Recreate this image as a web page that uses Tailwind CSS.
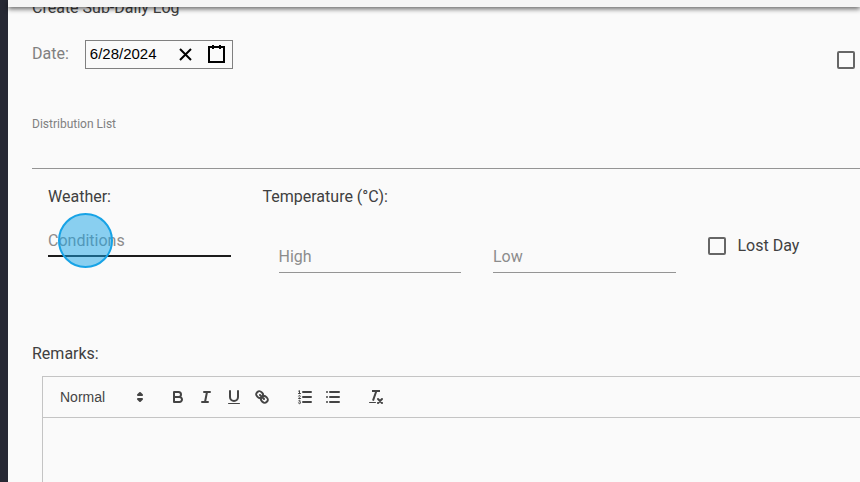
<!DOCTYPE html>
<html lang="en">
<head>
    <meta charset="UTF-8">
    <meta name="viewport" content="width=device-width, initial-scale=1.0">
    <title>Create Sub-Daily Log</title>
    <script src="https://cdn.jsdelivr.net/npm/@tailwindcss/browser@4"></script>
</head>
<body class="flex h-screen overflow-hidden bg-[#fafafa] font-[Roboto,sans-serif] text-base text-[#404040]">
    <!-- Sidebar edge -->
    <aside class="w-2 shrink-0 bg-[#272934]"></aside>

    <div class="flex min-w-0 flex-1 flex-col">
        <header class="relative z-10 h-[7px] shrink-0 bg-[#f5f5f5] shadow-[0_2px_5px_rgba(0,0,0,0.6)]"></header>

        <main class="flex min-h-0 flex-1 flex-col pl-6">
            <h1 class="-mt-[11px] shrink-0 leading-6">Create Sub-Daily Log</h1>

            <!-- Date -->
            <div class="mt-[19px] flex shrink-0 items-center justify-between pr-[5px]">
                <div class="flex items-center gap-4">
                    <label for="date" class="text-[#808080]">Date:</label>
                    <div class="flex h-[29px] items-center border border-[#808080]">
                        <input id="date" type="text" value="6/28/2024" class="w-[84px] pl-1 font-['Liberation_Sans',sans-serif] text-[15px] text-black outline-none">
                        <button type="button" aria-label="Clear date" class="px-[6px]">
                            <svg class="block size-[19px]" viewBox="0 0 19 19" stroke="black" stroke-width="2"><path d="M4 4 15 15M15 4 4 15"/></svg>
                        </button>
                        <button type="button" aria-label="Open calendar" class="px-[6px]">
                            <svg class="block size-[19px]" viewBox="0 0 19 19" stroke="black" stroke-width="2" fill="none"><rect x="2" y="2" width="15" height="15"/><path d="M6 0V4M13 0V4"/></svg>
                        </button>
                    </div>
                </div>
                <input type="checkbox" aria-label="Select log" class="mt-3 size-[18px] appearance-none rounded-[2px] border-2 border-[#666]">
            </div>

            <!-- Distribution list -->
            <div class="mt-[47px] flex shrink-0 flex-col border-b border-[#949494]">
                <label for="distribution" class="text-xs text-[#808080]">Distribution List</label>
                <input id="distribution" type="text" class="h-9 outline-none">
            </div>

            <!-- Weather and temperature -->
            <section class="-mr-[30px] grid shrink-0 grid-cols-4 pt-4">
                <div class="px-4">
                    <label for="conditions" class="block leading-6">Weather:</label>
                    <div class="relative mt-4">
                        <input id="conditions" type="text" placeholder="Conditions" class="block h-8 w-full border-b-2 border-[#1c1c1c] outline-none placeholder:text-[#8c8c8c]">
                        <span class="pointer-events-none absolute -top-3 left-[10px] size-[55px] rounded-full border-2 border-[#17a3e6] bg-[#17a3e6]/50"></span>
                    </div>
                </div>
                <fieldset class="col-span-2">
                    <legend class="block px-4 leading-6">Temperature (°C):</legend>
                    <div class="mt-8 grid grid-cols-2 gap-8 pl-8">
                        <input type="text" aria-label="High" placeholder="High" class="block h-8 w-full border-b border-[#949494] outline-none placeholder:text-[#8c8c8c]">
                        <input type="text" aria-label="Low" placeholder="Low" class="block h-8 w-full border-b border-[#949494] outline-none placeholder:text-[#8c8c8c]">
                    </div>
                </fieldset>
                <div class="px-8 pt-[49px]">
                    <label class="flex items-center gap-3 leading-6">
                        <input type="checkbox" class="size-[18px] appearance-none rounded-[2px] border-2 border-[#666]">
                        Lost Day
                    </label>
                </div>
            </section>

            <!-- Remarks -->
            <h2 id="remarks" class="mt-[69px] shrink-0 leading-6">Remarks:</h2>
            <div class="mt-[10px] ml-[10px] flex min-h-0 flex-1 flex-col border-t border-l border-[#c4c4c4]">
                <div class="flex shrink-0 gap-[15px] border-b border-[#c4c4c4] p-2">
                    <div class="relative h-6 w-[98px] text-[#444]">
                        <select aria-label="Heading" class="h-6 w-full appearance-none pl-[9px] font-['Liberation_Sans',sans-serif] text-sm outline-none">
                            <option>Normal</option>
                            <option>Heading 1</option>
                            <option>Heading 2</option>
                        </select>
                        <svg class="pointer-events-none absolute top-[3px] right-0 size-[18px]" viewBox="0 0 18 18" fill="#444" stroke="#444" stroke-width="2" stroke-linecap="round" stroke-linejoin="round"><path d="M7 11 9 13 11 11Z M7 7 9 5 11 7Z"/></svg>
                    </div>
                    <div class="flex">
                        <button type="button" aria-label="Bold" class="px-[5px]">
                            <svg class="block size-[18px]" viewBox="0 0 18 18" fill="none" stroke="#444" stroke-width="2" stroke-linecap="round" stroke-linejoin="round"><path d="M5 4H9.5A2.5 2.5 0 0 1 12 6.5A2.5 2.5 0 0 1 9.5 9H5V4ZM5 9H10.5A2.5 2.5 0 0 1 13 11.5A2.5 2.5 0 0 1 10.5 14H5V9Z"/></svg>
                        </button>
                        <button type="button" aria-label="Italic" class="px-[5px]">
                            <svg class="block size-[18px]" viewBox="0 0 18 18" fill="none" stroke="#444" stroke-width="2" stroke-linecap="round"><path d="M7 4H13M5 14H11M8 14 10 4"/></svg>
                        </button>
                        <button type="button" aria-label="Underline" class="px-[5px]">
                            <svg class="block size-[18px]" viewBox="0 0 18 18" fill="none" stroke="#444" stroke-width="2" stroke-linecap="round"><path d="M5 3V9A4.012 4.012 0 0 0 9 13A4.012 4.012 0 0 0 13 9V3"/><rect x="3" y="15" width="12" height="1" rx=".5" fill="#444" stroke="none"/></svg>
                        </button>
                        <button type="button" aria-label="Link" class="px-[5px]">
                            <svg class="block size-[18px]" viewBox="0 0 18 18" fill="none" stroke="#444" stroke-width="2" stroke-linecap="round" stroke-linejoin="round"><path d="M7 7 11 11M8.9 4.577A3.476 3.476 0 0 1 9.26 9.26 3.476 3.476 0 0 1 4.577 8.9C3.185 7.5 2.035 6.4 4.217 4.217S7.5 3.185 8.9 4.577ZM13.423 9.1A3.476 3.476 0 0 0 8.74 8.74 3.476 3.476 0 0 0 9.1 13.423C10.492 14.815 11.6 15.965 13.783 13.783S14.815 10.5 13.423 9.1Z"/></svg>
                        </button>
                    </div>
                    <div class="flex">
                        <button type="button" aria-label="Numbered list" class="px-[5px]">
                            <svg class="block size-[18px]" viewBox="0 0 18 18" fill="none" stroke="#444" stroke-linecap="round" stroke-linejoin="round"><path stroke-width="2" d="M7 4H15M7 9H15M7 14H15"/><path d="M2.5 5.5H4.5M2.6 3.1 3.5 2.6V5.5M4.5 10.5H2.5C2.5 9.7 4.35 9.1 4.35 8.2A.95.95 0 0 0 2.5 8.1M2.5 14.85A.96.96 0 0 0 4.5 14.5.9.9 0 0 0 3.5 13.8.8.8 0 0 0 4.3 13 .9.9 0 0 0 2.6 12.8"/></svg>
                        </button>
                        <button type="button" aria-label="Bulleted list" class="px-[5px]">
                            <svg class="block size-[18px]" viewBox="0 0 18 18" fill="none" stroke="#444" stroke-width="2" stroke-linecap="round"><path d="M6 4H15M6 9H15M6 14H15M3 4H3M3 9H3M3 14H3"/></svg>
                        </button>
                    </div>
                    <button type="button" aria-label="Clear formatting" class="px-[5px]">
                        <svg class="block size-[18px]" viewBox="0 0 18 18" fill="none" stroke="#444" stroke-width="2"><path d="M5 3H13M6 12.7 9.35 3"/><path d="M11 11 15 15M15 11 11 15" stroke-linecap="round"/><rect x="2" y="14" width="7" height="1" rx=".5" fill="#444" stroke="none"/></svg>
                    </button>
                </div>
                <div contenteditable="true" role="textbox" aria-labelledby="remarks" class="min-h-0 flex-1 px-4 py-3 outline-none"></div>
            </div>
        </main>
    </div>
</body>
</html>
